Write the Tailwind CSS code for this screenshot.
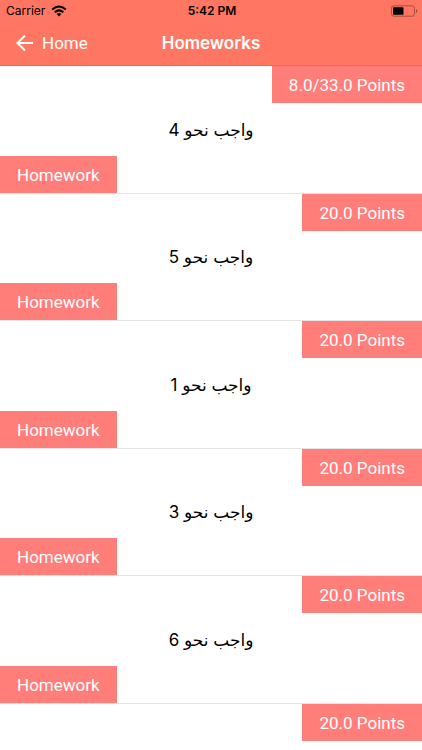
<!DOCTYPE html>
<html lang="en">
<head>
<meta charset="utf-8">
<meta name="viewport" content="width=device-width, initial-scale=1">
<title>Homeworks</title>
<script src="https://cdn.jsdelivr.net/npm/@tailwindcss/browser@4"></script>
</head>
<body class="flex h-screen flex-col overflow-hidden bg-white font-['Inter','DejaVu_Sans',sans-serif]">
<header class="shrink-0 border-b border-[#e06a60] bg-[#ff7762]">
  <div class="grid h-5 grid-cols-3 items-center pt-0.5 pr-1 pl-1.5 text-xs text-black">
    <div class="flex items-center gap-1.5">
      <span>Carrier</span>
      <svg class="h-3 w-4" viewBox="0 0 16 12" fill="none" stroke="black" stroke-width="2" aria-hidden="true"><path d="M1.2 4.5Q8-1.6 14.8 4.5M3.7 7.2q4.3-3.7 8.6 0"/><path d="M5.6 8.9Q8 7 10.4 8.9L8 11.5z" fill="black" stroke="none"/></svg>
    </div>
    <span class="text-center font-semibold">5:42 PM</span>
    <svg class="h-3 w-7 justify-self-end" viewBox="0 0 28 12" aria-hidden="true"><rect x="1.5" y=".8" width="23" height="10.4" rx="2.4" fill="none" stroke="#a84e42"/><rect x="3" y="2.3" width="10.5" height="7.4" rx=".6" fill="black"/><path d="M26 4v4q1.5-.6 1.5-2T26 4z" fill="#a84e42"/></svg>
  </div>
  <nav class="grid h-[45px] grid-cols-[1fr_auto_1fr] items-center px-4 pt-0.5 text-[17px] text-white">
    <a href="#" class="flex items-center gap-2 font-['Roboto',sans-serif]">
      <svg class="h-[18px] w-[18px]" viewBox="0 0 18 18" fill="none" stroke="white" stroke-width="2" aria-hidden="true"><path d="M9 .5 1.5 8 9 15.5M1.5 8H17"/></svg>
      <span>Home</span>
    </a>
    <h1 class="font-semibold">Homeworks</h1>
  </nav>
</header>
<main>
  <ul class="text-[17px] leading-9 text-white">
    <li class="flex min-h-32 flex-col justify-between border-b border-[#e4e4e4] even:min-h-[127px]">
      <span class="self-end bg-[#ff7e7a] px-[17px] pt-px font-['Roboto',sans-serif]">8.0/33.0 Points</span>
      <h2 dir="rtl" lang="ar" class="text-center leading-5 text-black">واجب نحو 4</h2>
      <span class="self-start bg-[#ff7e7a] px-[17px] pt-px font-['Roboto',sans-serif]">Homework</span>
    </li>
    <li class="flex min-h-32 flex-col justify-between border-b border-[#e4e4e4] even:min-h-[127px]">
      <span class="self-end bg-[#ff7e7a] px-[17px] pt-px font-['Roboto',sans-serif]">20.0 Points</span>
      <h2 dir="rtl" lang="ar" class="text-center leading-5 text-black">واجب نحو 5</h2>
      <span class="self-start bg-[#ff7e7a] px-[17px] pt-px font-['Roboto',sans-serif]">Homework</span>
    </li>
    <li class="flex min-h-32 flex-col justify-between border-b border-[#e4e4e4] even:min-h-[127px]">
      <span class="self-end bg-[#ff7e7a] px-[17px] pt-px font-['Roboto',sans-serif]">20.0 Points</span>
      <h2 dir="rtl" lang="ar" class="text-center leading-5 text-black">واجب نحو 1</h2>
      <span class="self-start bg-[#ff7e7a] px-[17px] pt-px font-['Roboto',sans-serif]">Homework</span>
    </li>
    <li class="flex min-h-32 flex-col justify-between border-b border-[#e4e4e4] even:min-h-[127px]">
      <span class="self-end bg-[#ff7e7a] px-[17px] pt-px font-['Roboto',sans-serif]">20.0 Points</span>
      <h2 dir="rtl" lang="ar" class="text-center leading-5 text-black">واجب نحو 3</h2>
      <span class="self-start bg-[#ff7e7a] px-[17px] pt-px font-['Roboto',sans-serif]">Homework</span>
    </li>
    <li class="flex min-h-32 flex-col justify-between border-b border-[#e4e4e4] even:min-h-[127px]">
      <span class="self-end bg-[#ff7e7a] px-[17px] pt-px font-['Roboto',sans-serif]">20.0 Points</span>
      <h2 dir="rtl" lang="ar" class="text-center leading-5 text-black">واجب نحو 6</h2>
      <span class="self-start bg-[#ff7e7a] px-[17px] pt-px font-['Roboto',sans-serif]">Homework</span>
    </li>
    <li class="flex flex-col">
      <span class="self-end bg-[#ff7e7a] px-[17px] pt-px font-['Roboto',sans-serif]">20.0 Points</span>
    </li>
  </ul>
</main>
</body>
</html>
